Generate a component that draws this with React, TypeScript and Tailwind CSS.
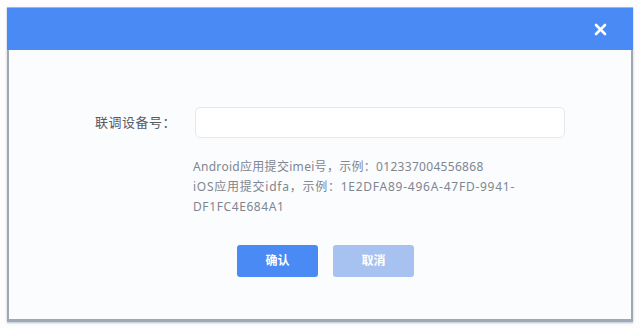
import React from "react";

export default function App() {
  return (
    <div className="w-[640px] h-[328px] bg-[#fdfdfe] pt-[7px] px-[7px]" style={{ fontFamily: '"Noto Sans", "Noto Sans CJK SC", sans-serif' }}>
      <div className="w-[626px] h-[315px] flex flex-col border-x-2 border-b-[3px] border-[#9ea8b6] shadow-[0_1px_2px_rgba(120,130,145,0.5)]">
        <div className="h-[43px] bg-[#4a8af4] flex items-center justify-end pr-[26px] -mx-[2px] border-t border-[#a9b6c8]">
          <svg width="13" height="13" viewBox="0 0 13 13">
            <path d="M2 2 L11 11 M11 2 L2 11" stroke="#fff" strokeWidth="2.6" strokeLinecap="round" />
          </svg>
        </div>
        <div className="flex-1 bg-[#fbfcfe] flex flex-col pt-[57px]">
          <div className="flex items-center">
            <div className="w-[186px] pl-[86px] text-[13px] text-[#555b66] tracking-[0.5px]">联调设备号：</div>
            <div className="w-[370px] h-[31px] rounded-[5px] border border-[#e4e7ec] bg-white" />
          </div>
          <div className="pl-[184px] mt-[19px] text-[12px] leading-[20px] text-[#80868f] tracking-[0.3px]">
            <div>Android应用提交imei号，示例：012337004556868</div>
            <div className="tracking-[0.75px]">iOS应用提交idfa，示例：1E2DFA89-496A-47FD-9941-</div>
            <div className="tracking-[0.6px]">DF1FC4E684A1</div>
          </div>
          <div className="flex gap-[15px] pl-[228px] mt-[28px]">
            <button className="w-[81px] h-[32px] rounded-[3px] bg-[#4a8af4] text-white text-[12px] font-bold">确认</button>
            <button className="w-[81px] h-[32px] rounded-[3px] bg-[#a7c2f0] text-white text-[12px] font-bold">取消</button>
          </div>
        </div>
      </div>
    </div>
  );
}
